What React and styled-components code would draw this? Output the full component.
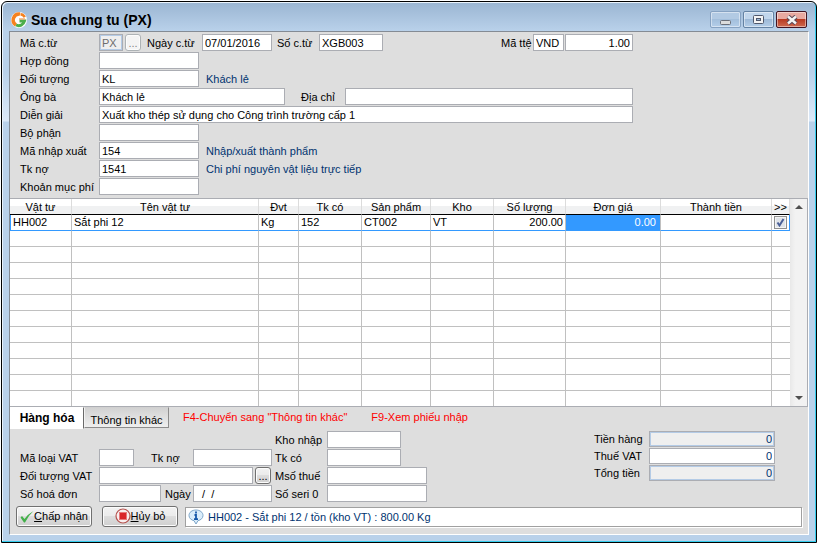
import React from "react";
import styled, { createGlobalStyle, css } from "styled-components";

const GlobalStyle = createGlobalStyle`
  * {
    box-sizing: border-box;
  }

  body {
    margin: 0;
    background: #ffffff;
  }

  body, input, button {
    font-family: "Liberation Sans", Arial, sans-serif;
    font-size: 11px;
    line-height: 14px;
    color: #000000;
  }
`;

const StyledWindow = styled.main`
  display: flex;
  flex-direction: column;
  min-height: calc(100vh - 3px);
  margin: 1px 2px 2px 1px;
  padding: 0 7px 7px;
  border: 1px solid #000000;
  border-radius: 6px 6px 0 0;
  box-shadow: inset -1px -1px #35cdee, inset 1px 1px #eaf3fc;
  background: linear-gradient(
    #9ab5d2 0,
    #b9d1ea 29px,
    #b9d1ea 70px,
    #dce9f8 119px,
    #b9d1ea 120px
  );
`;

const StyledTitleBar = styled.header`
  display: flex;
  align-items: center;
  height: 29px;
  padding: 6px 2px 0;
`;

const StyledTitle = styled.h1`
  flex: 1;
  margin: 0 0 0 4px;
  font-size: 14px;
  line-height: 18px;
`;

const StyledWindowButtons = styled.div`
  display: flex;
  gap: 2px;
`;

const StyledWindowButton = styled.button`
  display: flex;
  align-items: center;
  justify-content: center;
  width: 31px;
  height: 17px;
  padding: 0;
  border: 1px solid ${(props) => (props.$close ? "#431422" : "#6482a3")};
  border-radius: 2px;
  box-shadow: inset 0 0 0 1px rgba(255, 255, 255, 0.45);
  background: ${(props) =>
    props.$close
      ? "linear-gradient(#e8a9a0 0 45%, #b83a22 50%, #cf6a50)"
      : "linear-gradient(#c1d6ec 0 45%, #9db9d7 50%, #b4cee9)"};

  &:first-child {
    border-color: #86a2c2;
    background: linear-gradient(#b2cae3 0 45%, #a3bfdc 50%, #b4cee9);
  }
`;

const StyledPanel = styled.div`
  display: flex;
  flex: 1;
  flex-direction: column;
  border: 1px solid;
  border-color: #848b94 #ffffff #ffffff #848b94;
  background: #dedede;
`;

const StyledForm = styled.form`
  display: flex;
  flex-direction: column;
  gap: 1px;
  padding: 2px 175px 3px 10px;
`;

const StyledRow = styled.div`
  display: flex;
  align-items: center;
  height: 17px;
`;

const StyledLabel = styled.label`
  flex: none;
  width: ${(props) => props.$width || 79}px;
  padding-left: ${(props) => props.$indent || 0}px;
  white-space: nowrap;
`;

const StyledInput = styled.input`
  flex: ${(props) => (props.$width ? "none" : "1")};
  width: ${(props) => props.$width || 0}px;
  min-width: 0;
  height: 17px;
  padding: 0 2px;
  border: 1px solid #abadb3;
  outline: none;
  background: #ffffff;
  text-align: ${(props) => props.$align || "left"};

  &:disabled {
    box-shadow: inset 0 0 0 1px #b4cbe6;
    background: #efefef;
    color: #6d6d6d;
  }
`;

const StyledSpacer = styled.span`
  flex: ${(props) => (props.$width ? "none" : "1")};
  width: ${(props) => props.$width || 0}px;
`;

const StyledNote = styled.output`
  margin-left: 7px;
  color: #003370;
`;

const buttonFace = css`
  border: 1px solid #707070;
  border-radius: 3px;
  box-shadow: inset 0 0 0 1px #fcfcfc;
  background: linear-gradient(#f2f2f2 0, #ebebeb 50%, #dddddd 50%, #cfcfcf);
`;

const StyledLookupButton = styled.button`
  ${buttonFace}
  flex: none;
  width: 16px;
  height: 17px;
  margin: 0 4px 0 2px;
  padding: 0;

  &:disabled {
    border-color: #adb2b5;
    background: #f4f4f4;
    color: #838383;
  }
`;

const StyledGrid = styled.div`
  display: flex;
  border: 1px solid #abadb3;
  border-left: 0;
  background: #ffffff;
`;

const StyledTable = styled.table`
  flex: 1;
  width: 0;
  table-layout: fixed;
  border-collapse: separate;
  border-spacing: 0;
`;

const StyledTh = styled.th`
  height: 16px;
  padding: 0;
  border-right: 1px solid #dcdcdc;
  border-bottom: 1px solid #000000;
  background: linear-gradient(#ffffff 50%, #f0f1f2 50%);
  font-weight: normal;
`;

const StyledTd = styled.td`
  height: 16px;
  padding: 0 2px;
  border-right: 1px solid #c0c0c0;
  border-bottom: 1px solid #c0c0c0;
  line-height: 15px;
  text-align: ${(props) => props.$align || "left"};
  white-space: nowrap;

  &:last-child {
    padding: 0;
    border-right: 0;
  }
`;

const StyledTr = styled.tr`
  &:last-child td {
    height: 15px;
    border-bottom: 0;
  }

  ${(props) =>
    props.$current &&
    css`
      td {
        border-bottom-color: #3399ff;
      }

      td:first-child {
        border-left: 1px solid #3399ff;
      }

      td:last-child {
        border-right: 1px solid #3399ff;
      }

      td:nth-child(8) {
        padding-right: 4px;
        background: #3399ff;
        color: #ffffff;
      }
    `}
`;

const StyledCheckbox = styled.input`
  display: block;
  appearance: none;
  width: 13px;
  height: 13px;
  margin: 0 auto;
  border: 1px solid #8e8f8f;
  box-shadow: inset 0 0 0 1px #f4f4f4;
  background: #dfe3e8;

  &:checked {
    background: #dfe3e8
      url("data:image/svg+xml,%3Csvg xmlns='http://www.w3.org/2000/svg' viewBox='0 0 11 11'%3E%3Cpath d='M2.5 5.5 4.5 8.5 8.5 2' fill='none' stroke='%234a5f97' stroke-width='2'/%3E%3C/svg%3E");
  }
`;

const StyledScrollbar = styled.div`
  display: flex;
  flex-direction: column;
  justify-content: space-between;
  align-items: center;
  width: 17px;
  padding: 6px 0;
  background: linear-gradient(90deg, #e8e8e8, #f2f2f2 30%, #f2f2f2);
`;

const StyledScrollButton = styled.button`
  display: flex;
  padding: 0;
  border: 0;
  background: none;
`;

const StyledTabBar = styled.div`
  display: flex;
  align-items: flex-start;
  height: 24px;
`;

const StyledTab = styled.button`
  width: ${(props) => (props.$active ? 74 : 85)}px;
  height: ${(props) => (props.$active ? 22 : 21)}px;
  padding: ${(props) => (props.$active ? "0" : "4px 0 0")};
  border: 1px solid;
  border-color: ${(props) =>
    props.$active
      ? "#ffffff #696969 #ffffff #ffffff"
      : "#d0d0d0 #8c8c8c #8c8c8c #f2f2f2"};
  background: ${(props) =>
    props.$active ? "#ffffff" : "linear-gradient(#d2d2d2, #eeeeee)"};
  font-size: ${(props) => (props.$active ? 12 : 11)}px;
  font-weight: ${(props) => (props.$active ? "bold" : "normal")};
`;

const StyledHint = styled.span`
  margin: 3px 10px 0 14px;
  color: #ff0000;
`;

const StyledDetails = styled.form`
  display: flex;
  align-items: flex-start;
  padding: 0 33px 0 10px;
`;

const StyledColumn = styled.div`
  display: flex;
  flex-direction: column;
  gap: 1px;
  width: ${(props) => props.$width}px;
  padding-top: ${(props) => props.$top || 0}px;
  margin-left: ${(props) => (props.$end ? "auto" : "0")};
`;

const StyledTotalRow = styled(StyledRow)`
  height: 16px;
`;

const StyledTotalInput = styled(StyledInput)`
  height: 16px;
  color: #003370;

  &:disabled {
    color: #003370;
  }
`;

const StyledFooter = styled.footer`
  display: flex;
  align-items: center;
  gap: 10px;
  margin-top: auto;
  padding: 0 6px 7px;
`;

const StyledCommand = styled.button`
  ${buttonFace}
  display: flex;
  align-items: center;
  justify-content: center;
  width: 76px;
  height: 21px;
  padding: 0 0 1px;
  white-space: nowrap;
`;

const StyledStatus = styled.div`
  display: flex;
  flex: 1;
  align-items: center;
  gap: 4px;
  height: 20px;
  margin-left: -3px;
  padding-left: 2px;
  border: 1px solid #a0a0a0;
  box-shadow: 1px 1px #ffffff;
  background: #ffffff;
  color: #003370;
`;

const columns = [
  { title: "Vật tư", width: 62 },
  { title: "Tên vật tư" },
  { title: "Đvt", width: 40 },
  { title: "Tk có", width: 63 },
  { title: "Sản phẩm", width: 69 },
  { title: "Kho", width: 63 },
  { title: "Số lượng", width: 72, align: "right" },
  { title: "Đơn giá", width: 95, align: "right" },
  { title: "Thành tiền", width: 111, align: "right" },
  { title: ">>", width: 18 },
];

const item = ["HH002", "Sắt phi 12", "Kg", "152", "CT002", "VT", "200.00", "0.00", ""];

const LogoIcon = () => (
  <svg width="16" height="16" viewBox="0 0 16 16" aria-hidden="true">
    <circle cx="8" cy="8" r="8" fill="#ffffff" />
    <path d="M9 2A6 6 0 0 0 5 13" fill="none" stroke="#f58220" strokeWidth="3.4" />
    <path d="M5 13a6 6 0 0 0 8.5-4H8.5" fill="none" stroke="#4cae4c" strokeWidth="3" />
    <path d="M9.5 2.2q3 .3 4.2 3" fill="none" stroke="#f58220" strokeWidth="2.4" />
    <path d="M8 7h6" stroke="#f3a76a" strokeWidth="1.4" />
  </svg>
);

const MinimizeIcon = () => (
  <svg width="11" height="11" viewBox="0 0 11 11" aria-hidden="true">
    <rect x=".5" y="6.5" width="10" height="4" rx="1" fill="#dcdcdc" stroke="#6b6f78" />
  </svg>
);

const RestoreIcon = () => (
  <svg width="11" height="9" viewBox="0 0 11 9" aria-hidden="true">
    <rect x=".5" y=".5" width="10" height="8" rx="1" fill="#f4f4f4" stroke="#50586c" />
    <rect x="3.5" y="3.5" width="4" height="2" fill="#9db9d7" stroke="#50586c" />
  </svg>
);

const CloseIcon = () => (
  <svg width="12" height="10" viewBox="0 0 12 10" aria-hidden="true">
    <path d="m2 1.500 8 7m0-7-8 7" stroke="#5d4a58" strokeWidth="4.6" />
    <path d="m2 1.500 8 7m0-7-8 7" stroke="#f4f4f4" strokeWidth="2.4" />
  </svg>
);

const CheckIcon = () => (
  <svg width="14" height="13" viewBox="0 0 14 13" aria-hidden="true">
    <path d="M.5 7.5 2 6l2.5 3Q8 4 13.5 1 8 6 5 12.5H4Z" fill="#43b04a" />
  </svg>
);

const StopIcon = () => (
  <svg width="16" height="16" viewBox="0 0 16 16" aria-hidden="true">
    <circle cx="8" cy="8" r="7" fill="#f8eeee" stroke="#b5534f" strokeWidth="1.2" />
    <rect x="4.5" y="4.5" width="7" height="7" fill="#d9252a" stroke="#e8797b" />
  </svg>
);

const InfoIcon = () => (
  <svg width="16" height="16" viewBox="0 0 16 16" aria-hidden="true">
    <path
      d="M8 1c4 0 7 2.3 7 5.5 0 2.7-2.3 4.6-5 5.2L8 15l-2-3.3c-2.700-.6-5-2.500-5-5.200C1 3.300 4 1 8 1Z"
      fill="#d9ecfa"
      stroke="#7ea6c9"
    />
    <path d="M8 2.500v2M6.500 6H8v4M6 10.200h4" fill="none" stroke="#1657a8" strokeWidth="1.8" />
  </svg>
);

const Field = ({ id, label, labelWidth, indent, ...input }) => (
  <>
    <StyledLabel htmlFor={id} $width={labelWidth} $indent={indent}>
      {label}
    </StyledLabel>
    <StyledInput id={id} {...input} />
  </>
);

const VoucherForm = () => (
  <StyledForm>
    <StyledRow>
      <Field id="type" label="Mã c.từ" $width={24} defaultValue="PX" disabled />
      <StyledLookupButton type="button" disabled>...</StyledLookupButton>
      <Field id="date" label="Ngày c.từ" labelWidth={57} indent={2} $width={70} defaultValue="07/01/2016" />
      <Field id="number" label="Số c.từ" labelWidth={47} indent={5} $width={64} defaultValue="XGB003" />
      <StyledSpacer />
      <Field id="currency" label="Mã ttệ" labelWidth={32} $width={31} defaultValue="VND" />
      <StyledSpacer $width={1} />
      <StyledInput aria-label="Tỷ giá" $width={68} $align="right" defaultValue="1.00" />
    </StyledRow>
    <StyledRow>
      <Field id="contract" label="Hợp đồng" $width={100} />
    </StyledRow>
    <StyledRow>
      <Field id="partner" label="Đối tượng" $width={100} defaultValue="KL" />
      <StyledNote htmlFor="partner">Khách lẻ</StyledNote>
    </StyledRow>
    <StyledRow>
      <Field id="person" label="Ông bà" $width={186} defaultValue="Khách lẻ" />
      <Field id="address" label="Địa chỉ" labelWidth={60} indent={16} />
    </StyledRow>
    <StyledRow>
      <Field id="memo" label="Diễn giải" defaultValue="Xuất kho thép sử dụng cho Công trình trường cấp 1" />
    </StyledRow>
    <StyledRow>
      <Field id="department" label="Bộ phận" $width={100} />
    </StyledRow>
    <StyledRow>
      <Field id="reason" label="Mã nhập xuất" $width={100} defaultValue="154" />
      <StyledNote htmlFor="reason">Nhập/xuất thành phẩm</StyledNote>
    </StyledRow>
    <StyledRow>
      <Field id="debit" label="Tk nợ" $width={100} defaultValue="1541" />
      <StyledNote htmlFor="debit">Chi phí nguyên vật liệu trực tiếp</StyledNote>
    </StyledRow>
    <StyledRow>
      <Field id="cost" label="Khoản mục phí" $width={100} />
    </StyledRow>
  </StyledForm>
);

const ItemGrid = () => (
  <StyledGrid>
    <StyledTable>
      <colgroup>
        {columns.map(({ title, width }) => (
          <col key={title} width={width} />
        ))}
      </colgroup>
      <thead>
        <tr>
          {columns.map(({ title }) => (
            <StyledTh key={title}>{title}</StyledTh>
          ))}
        </tr>
      </thead>
      <tbody>
        <StyledTr $current>
          {item.map((value, i) => (
            <StyledTd key={columns[i].title} $align={columns[i].align}>
              {value}
            </StyledTd>
          ))}
          <StyledTd>
            <StyledCheckbox type="checkbox" aria-label="HH002" defaultChecked />
          </StyledTd>
        </StyledTr>
        {Array.from({ length: 11 }, (_, row) => (
          <StyledTr key={row}>
            {columns.map(({ title }) => (
              <StyledTd key={title} />
            ))}
          </StyledTr>
        ))}
      </tbody>
    </StyledTable>
    <StyledScrollbar>
      <StyledScrollButton type="button" aria-label="Lên">
        <svg width="8" height="4" viewBox="0 0 8 4">
          <path d="M0 4 4 0l4 4Z" fill="#505050" />
        </svg>
      </StyledScrollButton>
      <StyledScrollButton type="button" aria-label="Xuống">
        <svg width="8" height="4" viewBox="0 0 8 4">
          <path d="m0 0 4 4 4-4Z" fill="#505050" />
        </svg>
      </StyledScrollButton>
    </StyledScrollbar>
  </StyledGrid>
);

const TotalField = ({ id, label, disabled }) => (
  <StyledTotalRow>
    <StyledLabel htmlFor={id} $width={55}>{label}</StyledLabel>
    <StyledTotalInput id={id} $align="right" defaultValue="0" disabled={disabled} />
  </StyledTotalRow>
);

const DetailsForm = () => (
  <StyledDetails>
    <StyledColumn $width={255} $top={18}>
      <StyledRow>
        <Field id="vatType" label="Mã loại VAT" $width={35} />
        <StyledSpacer />
        <Field id="vatDebit" label="Tk nợ" labelWidth={42} $width={79} />
        <StyledSpacer $width={3} />
      </StyledRow>
      <StyledRow>
        <Field id="vatPartner" label="Đối tượng VAT" />
        <StyledLookupButton type="button">...</StyledLookupButton>
      </StyledRow>
      <StyledRow>
        <Field id="invoice" label="Số hoá đơn" $width={62} />
        <StyledSpacer />
        <Field id="invoiceDate" label="Ngày" labelWidth={28} $width={79} defaultValue="  /  /" />
        <StyledSpacer $width={3} />
      </StyledRow>
    </StyledColumn>
    <StyledColumn $width={152}>
      <StyledRow>
        <Field id="warehouse" label="Kho nhập" labelWidth={52} $width={74} />
      </StyledRow>
      <StyledRow>
        <Field id="credit" label="Tk có" labelWidth={52} $width={74} />
      </StyledRow>
      <StyledRow>
        <Field id="taxCode" label="Msố thuế" labelWidth={52} $width={100} />
      </StyledRow>
      <StyledRow>
        <Field id="serial" label="Số seri 0" labelWidth={52} $width={100} />
      </StyledRow>
    </StyledColumn>
    <StyledColumn $width={181} $end>
      <TotalField id="amount" label="Tiền hàng" disabled />
      <TotalField id="vat" label="Thuế VAT" />
      <TotalField id="total" label="Tổng tiền" disabled />
    </StyledColumn>
  </StyledDetails>
);

const App = () => (
  <>
    <GlobalStyle />
    <StyledWindow>
      <StyledTitleBar>
        <LogoIcon />
        <StyledTitle>Sua chung tu (PX)</StyledTitle>
        <StyledWindowButtons>
          <StyledWindowButton aria-label="Minimize"><MinimizeIcon /></StyledWindowButton>
          <StyledWindowButton aria-label="Restore"><RestoreIcon /></StyledWindowButton>
          <StyledWindowButton aria-label="Close" $close><CloseIcon /></StyledWindowButton>
        </StyledWindowButtons>
      </StyledTitleBar>
      <StyledPanel>
        <VoucherForm />
        <ItemGrid />
        <StyledTabBar>
          <StyledTab type="button" $active>Hàng hóa</StyledTab>
          <StyledTab type="button">Thông tin khác</StyledTab>
          <StyledHint>F4-Chuyển sang "Thông tin khác"</StyledHint>
          <StyledHint>F9-Xem phiếu nhập</StyledHint>
        </StyledTabBar>
        <DetailsForm />
        <StyledFooter>
          <StyledCommand type="button">
            <CheckIcon />
            <span><u>C</u>hấp nhận</span>
          </StyledCommand>
          <StyledCommand type="button">
            <StopIcon />
            <span><u>H</u>ủy bỏ</span>
          </StyledCommand>
          <StyledStatus role="status">
            <InfoIcon />
            HH002 - Sắt phi 12 / tồn (kho VT) : 800.00 Kg
          </StyledStatus>
        </StyledFooter>
      </StyledPanel>
    </StyledWindow>
  </>
);

export default App;
